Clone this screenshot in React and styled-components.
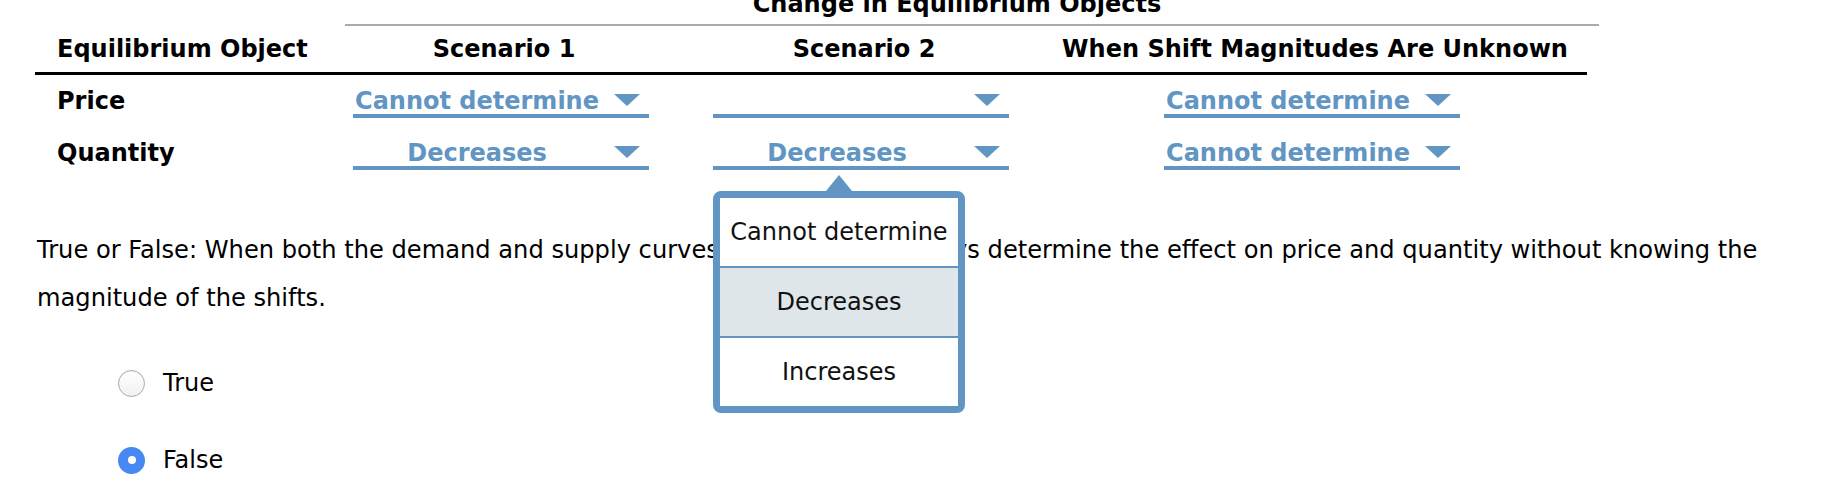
import React from "react";
import styled, { createGlobalStyle } from "styled-components";

const blue = "#6195c3";

const GlobalStyle = createGlobalStyle`
  html, body {
    margin: 0;
    padding: 0;
    background: #fff;
  }
  body {
    font-family: "DejaVu Sans", Verdana, sans-serif;
    font-size: 24px;
    color: #000;
    overflow: hidden;
  }
`;

const Page = styled.div`
  padding-left: 35px;
  margin-top: -10px;
`;

const Table = styled.div`
  display: grid;
  grid-template-columns: 288px 362px 358px 544px;
  width: 1552px;
`;

const TitleCell = styled.div`
  grid-column: 2 / 5;
  padding-left: 22px;
  margin-right: -12px;
`;

const TitleText = styled.div`
  height: 34px;
  line-height: 28px;
  font-weight: bold;
  text-align: center;
  border-bottom: 2px solid #aaa;
  padding-right: 30px;
`;

const HeadCell = styled.div`
  height: 46px;
  line-height: 46px;
  font-weight: bold;
  border-bottom: 3px solid #000;
  text-align: ${(p) => (p.left ? "left" : "center")};
  padding-left: ${(p) => (p.left ? "22px" : "0")};
  white-space: nowrap;
`;

const Cell = styled.div`
  height: 52px;
  display: flex;
  align-items: center;
  justify-content: ${(p) => (p.left ? "flex-start" : "center")};
  padding-left: ${(p) => (p.left ? "22px" : "0")};
  padding-right: ${(p) => (p.left ? "0" : "6px")};
  font-weight: bold;
`;

const Dropdown = styled.div`
  position: relative;
  width: 296px;
  height: 30px;
  border-bottom: 4px solid ${blue};
  display: flex;
  align-items: center;
  cursor: pointer;
`;

const DropText = styled.span`
  flex: 1;
  position: relative;
  top: 2px;
  text-align: center;
  color: ${blue};
  font-weight: bold;
  line-height: 30px;
  white-space: nowrap;
`;

const Caret = styled.span`
  width: 48px;
  display: flex;
  justify-content: flex-start;
  padding: 2px 0 0 13px;
  box-sizing: border-box;

  &::after {
    content: "";
    border-left: 13.5px solid transparent;
    border-right: 13.5px solid transparent;
    border-top: 12px solid ${blue};
  }
`;

const Popup = styled.ul`
  position: absolute;
  top: calc(100% + 25px);
  left: 0;
  width: 252px;
  box-sizing: border-box;
  margin: 0;
  padding: 0;
  list-style: none;
  background: #fff;
  border: 7px solid ${blue};
  border-radius: 8px;
  z-index: 5;

  &::before {
    content: "";
    position: absolute;
    top: -23px;
    left: 50%;
    transform: translateX(-50%);
    border-left: 13px solid transparent;
    border-right: 13px solid transparent;
    border-bottom: 16px solid ${blue};
  }
`;

const Option = styled.li`
  height: 68px;
  line-height: 68px;
  text-align: center;
  font-weight: normal;
  color: #111;
  background: ${(p) => (p.selected ? "#dfe6e9" : "#fff")};
  border-top: ${(p) => (p.first ? "none" : `2px solid ${blue}`)};
  white-space: nowrap;
`;

const Question = styled.p`
  margin: 47px 0 0;
  padding-left: 2px;
  font-size: 24.15px;
  line-height: 48px;
`;

const Choices = styled.div`
  margin-top: 37px;
  padding-left: 83px;
  display: flex;
  flex-direction: column;
  gap: 29px;
`;

const Choice = styled.label`
  height: 48px;
  display: flex;
  align-items: center;
  gap: 18px;
`;

const Radio = styled.span`
  width: 27px;
  height: 27px;
  border-radius: 50%;
  box-sizing: border-box;
  display: flex;
  align-items: center;
  justify-content: center;
  border: ${(p) => (p.checked ? "none" : "1px solid #a9a9a9")};
  background: ${(p) =>
    p.checked ? "#4689f2" : "linear-gradient(#ffffff, #f1f1f1)"};
  box-shadow: ${(p) => (p.checked ? "none" : "inset 0 1px 1px rgba(0,0,0,0.06)")};

  &::after {
    content: "";
    display: ${(p) => (p.checked ? "block" : "none")};
    width: 8px;
    height: 8px;
    border-radius: 50%;
    background: #fff;
  }
`;

function Select({ value, open, options }) {
  return (
    <Dropdown>
      <DropText>{value}</DropText>
      <Caret />
      {open && (
        <Popup>
          {options.map((o, i) => (
            <Option key={o} first={i === 0} selected={o === value}>
              {o}
            </Option>
          ))}
        </Popup>
      )}
    </Dropdown>
  );
}

const choices = ["Cannot determine", "Decreases", "Increases"];

export default function App() {
  return (
    <>
      <GlobalStyle />
      <Page>
        <Table>
          <div />
          <TitleCell>
            <TitleText>Change in Equilibrium Objects</TitleText>
          </TitleCell>

          <HeadCell left>Equilibrium Object</HeadCell>
          <HeadCell>Scenario 1</HeadCell>
          <HeadCell>Scenario 2</HeadCell>
          <HeadCell>When Shift Magnitudes Are Unknown</HeadCell>

          <Cell left>Price</Cell>
          <Cell><Select value="Cannot determine" /></Cell>
          <Cell><Select value="" /></Cell>
          <Cell><Select value="Cannot determine" /></Cell>

          <Cell left>Quantity</Cell>
          <Cell><Select value="Decreases" /></Cell>
          <Cell><Select value="Decreases" open options={choices} /></Cell>
          <Cell><Select value="Cannot determine" /></Cell>
        </Table>

        <Question>
          True or False: When both the demand and supply curves shift, you can always determine
          the effect on price and quantity without knowing the magnitude of the shifts.
        </Question>

        <Choices>
          <Choice>
            <Radio />
            True
          </Choice>
          <Choice>
            <Radio checked />
            False
          </Choice>
        </Choices>
      </Page>
    </>
  );
}
